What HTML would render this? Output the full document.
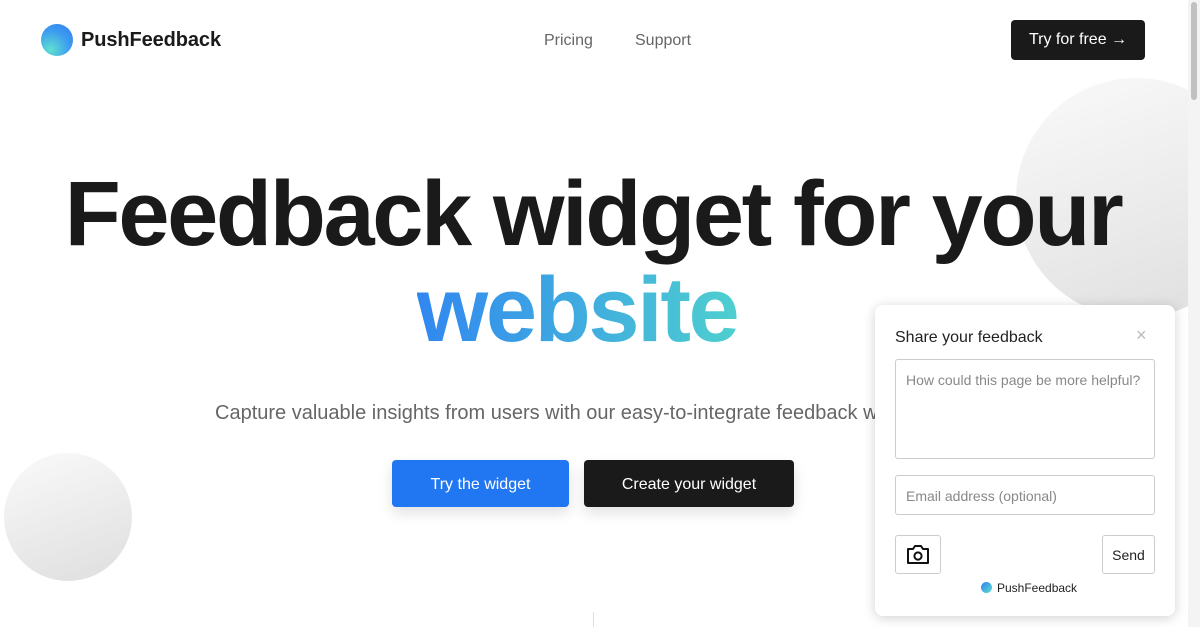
<!DOCTYPE html>
<html><head><meta charset="utf-8"><style>
*{margin:0;padding:0;box-sizing:border-box}
body{width:1200px;height:627px;overflow:hidden;background:#fff;font-family:"Liberation Sans",sans-serif;position:relative;color:#1a1a1a}
.abs{position:absolute}
.logo{left:41px;top:24px;width:32px;height:32px;border-radius:50%;background:radial-gradient(circle at 30% 80%,#5fe0cf,#3d9cf0 55%,#2f7df0)}
.brand{left:81px;top:29px;font-size:20px;font-weight:bold;letter-spacing:-0.1px}
.nav{top:32px;font-size:16px;color:#666}
.cta{left:1011px;top:20px;width:134px;height:40px;background:#1a1a1a;color:#fff;border-radius:4px;font-size:16px;line-height:40px;text-align:center}
.h1{left:0;width:1186px;text-align:center;font-weight:bold;font-size:92px;letter-spacing:-2.4px;line-height:1}
.grad{background:linear-gradient(90deg,#3187f0,#4ecfcf);-webkit-background-clip:text;background-clip:text;color:transparent}
.sub{left:215px;top:402px;font-size:20px;color:#666;white-space:nowrap}
.btn{top:460px;height:47px;border-radius:4px;color:#fff;font-size:16px;line-height:49px;text-align:center;box-shadow:0 6px 14px rgba(0,0,0,.12)}
.circ{border-radius:50%;background:linear-gradient(160deg,#fafafa,#dedede)}
.w{left:875px;top:305px;width:300px;height:311px;background:#fff;border-radius:8px;box-shadow:0 2px 12px rgba(0,0,0,.18);font-family:"Liberation Sans",sans-serif}
.box{border:1px solid #ccc;border-radius:3px;position:absolute;color:#888;font-size:14px}
</style></head><body>
<div class="abs circ" style="left:1016px;top:78px;width:240px;height:240px"></div>
<div class="abs circ" style="left:4px;top:453px;width:128px;height:128px"></div>
<div class="abs" style="left:1188px;top:0;width:12px;height:627px;background:#f4f4f4"></div>
<div class="abs" style="left:1191px;top:2px;width:6px;height:98px;background:#c1c1c1;border-radius:3px"></div>
<div class="abs logo"></div>
<div class="abs brand">PushFeedback</div>
<div class="abs nav" style="left:544px">Pricing</div>
<div class="abs nav" style="left:635px">Support</div>
<div class="abs cta">Try for free →</div>
<div class="abs h1" style="top:168px">Feedback widget for your</div>
<div class="abs h1" style="top:264px;left:-16px"><span class="grad">website</span></div>
<div class="abs sub">Capture valuable insights from users with our easy-to-integrate feedback widget</div>
<div class="abs btn" style="left:392px;width:177px;background:#2176f2">Try the widget</div>
<div class="abs btn" style="left:584px;width:210px;background:#1a1a1a">Create your widget</div>
<div class="abs" style="left:593px;top:612px;width:1px;height:15px;background:#ddd"></div>
<div class="abs w">
<div class="abs" style="left:20px;top:24px;font-size:16px;color:#222">Share your feedback</div>
<div class="abs" style="left:261px;top:20px;font-size:18px;color:#bbb">×</div>
<div class="box" style="left:20px;top:54px;width:260px;height:100px;padding:12px 10px">How could this page be more helpful?</div>
<div class="box" style="left:20px;top:170px;width:260px;height:40px;padding:12px 10px">Email address (optional)</div>
<div class="box" style="left:20px;top:230px;width:46px;height:39px">
<svg width="26" height="22" viewBox="0 0 26 22" style="position:absolute;left:9px;top:8px"><path d="M3 5h5l2-3h6l2 3h5v14H3z" fill="none" stroke="#111" stroke-width="2" stroke-linejoin="round"/><circle cx="13" cy="12" r="3.6" fill="none" stroke="#111" stroke-width="2"/></svg></div>
<div class="box" style="left:227px;top:230px;width:53px;height:39px;color:#222;font-size:14px;text-align:center;line-height:39px">Send</div>
<div class="abs" style="left:106px;top:277px;width:11px;height:11px;border-radius:50%;background:linear-gradient(135deg,#2f7df0,#5fe0cf)"></div>
<div class="abs" style="left:122px;top:276px;font-size:12px;color:#222">PushFeedback</div>
</div>
</body></html>
